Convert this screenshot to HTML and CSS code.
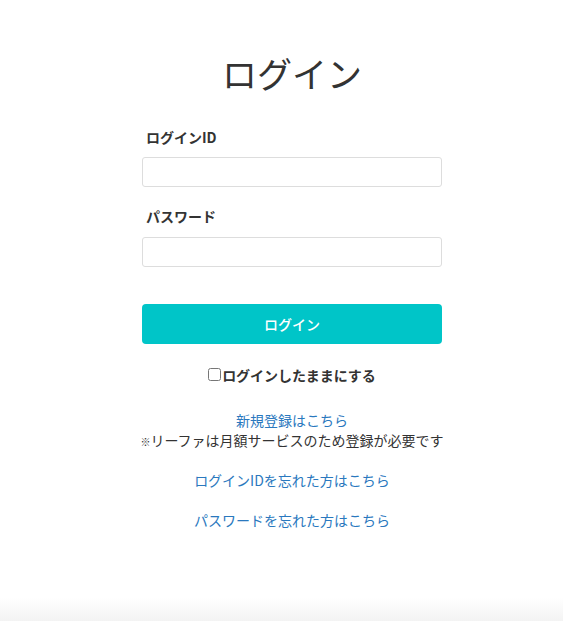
FILE: index.html
```html
<!DOCTYPE html>
<html>
<head>
	<meta charset="utf-8">
	<link rel="stylesheet" href="styles.css">
	<title>ログイン</title>
</head>
<body>
	<div class="login">
		<h1 class="title">ログイン</h1>
		<form class="form">
			<label class="label" for="login-id">ログインID</label>
			<input class="field" id="login-id" type="text">
			<label class="label label-pass" for="password">パスワード</label>
			<input class="field" id="password" type="password">
			<button class="submit" type="button">ログイン</button>
			<label class="remember"><input class="check" type="checkbox">ログインしたままにする</label>
		</form>
		<div class="links">
			<a class="link" href="#">新規登録はこちら</a>
			<p class="note"><span class="mark">※</span>リーファは月額サービスのため登録が必要です</p>
			<a class="link gap" href="#">ログインIDを忘れた方はこちら</a>
			<a class="link gap" href="#">パスワードを忘れた方はこちら</a>
		</div>
	</div>
</body>
</html>
```

FILE: styles.css
```css
html {
	height: 100%;
	background: linear-gradient(to bottom, #fff calc(100% - 24px), #f3f3f3)
}

body {
	margin: 0;
	padding-left: 21px;
	min-height: 100%;
	font-family: "Noto Sans CJK JP", "Liberation Sans", sans-serif;
	color: #333
}

.login {
	width: 300px;
	margin: 0 auto;
	padding-top: 46px;
	display: flex;
	flex-direction: column
}

.title {
	margin: 0;
	font-size: 35px;
	line-height: 54px;
	font-weight: normal;
	text-align: center;
	color: #333
}

.form {
	display: flex;
	flex-direction: column;
	margin-top: 27px
}

.label {
	font-size: 14px;
	line-height: 20px;
	font-weight: bold;
	padding-left: 4px;
	margin-bottom: 10px
}

.label-pass {
	margin-top: 19px;
	margin-bottom: 11px
}

.field {
	box-sizing: border-box;
	width: 300px;
	height: 30px;
	margin: 0;
	border: 1px solid #ddd;
	border-radius: 3px;
	background: #fff;
	font-size: 14px;
	padding: 0 8px
}

.submit {
	height: 40px;
	margin-top: 37px;
	border: none;
	border-radius: 4px;
	background-color: #00c5c8;
	color: #fff;
	font-family: inherit;
	font-size: 14px;
	font-weight: 500;
	cursor: pointer
}

.remember {
	margin-top: 21px;
	font-size: 14px;
	line-height: 20px;
	font-weight: bold;
	text-align: center;
	display: flex;
	justify-content: center;
	align-items: center
}

.check {
	width: 13px;
	height: 13px;
	margin: 0 1px 2px 0
}

.links {
	display: flex;
	flex-direction: column;
	align-items: center;
	margin-top: 25px;
	font-size: 14px;
	line-height: 20px
}

.link {
	color: #2a78be;
	text-decoration: none
}

.gap {
	margin-top: 20px
}

.note {
	margin: 0;
	height: 20px;
	white-space: nowrap;
	color: #333
}

.mark {
	font-size: 10px;
	line-height: 1
}
```
